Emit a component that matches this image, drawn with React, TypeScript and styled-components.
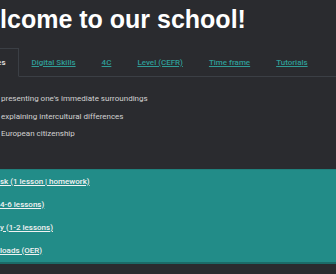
import React from 'react';
import styled, { createGlobalStyle } from 'styled-components';

const GlobalStyle = createGlobalStyle`
  html, body {
    margin: 0;
    padding: 0;
    background: #2a2b2f;
    overflow: hidden;
  }
  body {
    font-family: Roboto, "Liberation Sans", sans-serif;
  }
`;

const Page = styled.div`
  width: 336px;
  height: 274px;
  display: flex;
  flex-direction: column;
`;

const Title = styled.h1`
  margin: 4px 0 0 -37px;
  font-family: "Liberation Sans", Arial, sans-serif;
  font-size: 25px;
  font-weight: 700;
  line-height: 30px;
  color: #ffffff;
  white-space: nowrap;
`;

const Tabs = styled.nav`
  display: flex;
  height: 28px;
  margin: 14px 0 0 -57px;
  border-bottom: 1px solid #3b3f45;
  white-space: nowrap;
`;

interface TabProps {
  $active?: boolean;
}

const Tab = styled.a<TabProps>`
  display: flex;
  align-items: center;
  padding: 0 12px;
  margin-bottom: -1px;
  border: 1px solid ${p => (p.$active ? '#3b3f45' : 'transparent')};
  border-bottom: 1px solid ${p => (p.$active ? '#2a2b2f' : 'transparent')};
  font-size: 8px;
  font-weight: 500;
  color: ${p => (p.$active ? '#e6e6e6' : '#2f9d97')};
  text-decoration: ${p => (p.$active ? 'none' : 'underline')};
  cursor: pointer;
`;

const Goals = styled.ul`
  list-style: none;
  margin: 13px 0 0;
  padding: 0 0 0 1px;
`;

const Goal = styled.li`
  font-size: 8px;
  line-height: 17.5px;
  color: #d2d2d2;
  white-space: nowrap;
`;

const Panel = styled.section`
  margin-top: 26px;
  padding: 0;
  background: #228c88;
  border-top: 1px solid #1f807c;
  border-bottom: 2px solid #1b6b68;
  display: flex;
  flex-direction: column;
`;

const PanelLink = styled.a`
  display: block;
  height: 23px;
  line-height: 23px;
  font-size: 8px;
  font-weight: 500;
  color: #f2f2f2;
  text-decoration: underline;
  white-space: nowrap;
`;

const tabs = ['Competences', 'Digital Skills', '4C', 'Level (CEFR)', 'Time frame', 'Tutorials'];

const goals = [
  "presenting one's immediate surroundings",
  'explaining intercultural differences',
  'European citizenship'
];

const links = ['sk (1 lesson | homework)', '4-6 lessons)', 'y (1-2 lessons)', 'loads (OER)'];

export default function App() {
  return (
    <Page>
      <GlobalStyle />
      <Title>Welcome to our school!</Title>
      <Tabs>
        {tabs.map((t, i) => (
          <Tab key={t} $active={i === 0}>
            {t}
          </Tab>
        ))}
      </Tabs>
      <Goals>
        {goals.map(g => (
          <Goal key={g}>{g}</Goal>
        ))}
      </Goals>
      <Panel>
        {links.map(l => (
          <PanelLink key={l}>{l}</PanelLink>
        ))}
      </Panel>
    </Page>
  );
}
